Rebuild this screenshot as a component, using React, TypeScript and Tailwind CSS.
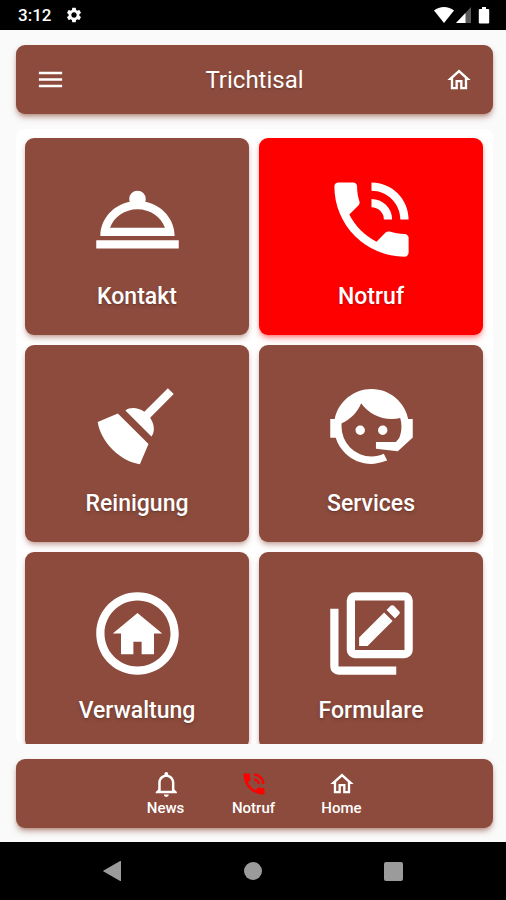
import React from 'react';
import { MdSettings } from 'react-icons/md';

const icons = {
  menu: 'M3,6H21V8H3V6M3,11H21V13H3V11M3,16H21V18H3V16Z',
  home: 'M12 5.69L17 10.19V18H15V12H9V18H7V10.19L12 5.69M12 3L2 12H5V20H11V14H13V20H19V12H22L12 3',
  bell: 'M16,17H7V10.5C7,8 9,6 11.5,6C14,6 16,8 16,10.5M18,16V10.5C18,7.43 15.86,4.86 13,4.18V3.5A1.5,1.5 0 0,0 11.5,2A1.5,1.5 0 0,0 10,3.5V4.18C7.13,4.86 5,7.43 5,10.5V16L3,18V19H20V18M11.5,22A2,2 0 0,0 13.5,20H9.5A2,2 0 0,0 11.5,22Z',
  phone:
    'M15,12H17A5,5 0 0,0 12,7V9A3,3 0 0,1 15,12M19,12H21C21,7 16.97,3 12,3V5C15.86,5 19,8.13 19,12M20,15.5C18.75,15.5 17.55,15.3 16.43,14.93C16.08,14.82 15.69,14.9 15.41,15.18L13.21,17.38C10.38,15.94 8.06,13.62 6.62,10.79L8.82,8.59C9.1,8.31 9.18,7.92 9.07,7.57C8.7,6.45 8.5,5.25 8.5,4A1,1 0 0,0 7.5,3H4A1,1 0 0,0 3,4A17,17 0 0,0 20,21A1,1 0 0,0 21,20V16.5A1,1 0 0,0 20,15.5Z',
  roomService:
    'M12,5A2,2 0 0,1 14,7C14,7.24 13.96,7.47 13.88,7.69C17.95,8.5 21,11.91 21,16H3C3,11.91 6.05,8.5 10.12,7.69C10.04,7.47 10,7.24 10,7A2,2 0 0,1 12,5M22,19H2V17H22V19M12,9.5C8.89,9.5 6.25,11.39 5.34,14H18.66C17.75,11.39 15.11,9.5 12,9.5Z',
  broom:
    'M19.36,2.72L20.78,4.14L15.06,9.85C16.13,11.39 16.28,13.24 15.38,14.44L9.06,8.12C10.26,7.22 12.11,7.37 13.65,8.44L19.36,2.72M5.93,17.57C3.92,15.56 2.69,13.16 2.35,10.92L7.23,8.83L14.67,16.27L12.58,21.15C10.34,20.81 7.94,19.58 5.93,17.57Z',
  agent:
    'M18.72,14.76C19.07,13.91 19.26,13 19.26,12C19.26,11.28 19.15,10.59 18.96,9.95C18.31,10.1 17.63,10.18 16.92,10.18C13.86,10.18 11.15,8.67 9.5,6.34C8.61,8.5 6.91,10.26 4.77,11.22C4.73,11.47 4.73,11.74 4.73,12A7.27,7.27 0 0,0 12,19.27C13.05,19.27 14.06,19.04 14.97,18.63C15.54,19.72 15.8,20.26 15.78,20.26C14.14,20.81 12.87,21.08 12,21.08C9.58,21.08 7.27,20.13 5.57,18.42C4.53,17.38 3.76,16.11 3.33,14.73H2V10.18H3.09C3.93,6.04 7.6,2.92 12,2.92C14.4,2.92 16.71,3.87 18.42,5.58C19.69,6.84 20.54,8.45 20.89,10.18H22V14.67H22V14.69L22,14.73H21.94L18.38,18L13.08,17.4V15.73H17.91L18.72,14.76M9.27,11.77C9.57,11.77 9.86,11.89 10.07,12.11C10.28,12.32 10.4,12.61 10.4,12.91C10.4,13.21 10.28,13.5 10.07,13.71C9.86,13.92 9.57,14.04 9.27,14.04C8.64,14.04 8.13,13.54 8.13,12.91C8.13,12.28 8.64,11.77 9.27,11.77M14.72,11.77C15.35,11.77 15.85,12.28 15.85,12.91C15.85,13.54 15.35,14.04 14.72,14.04C14.09,14.04 13.58,13.54 13.58,12.91A1.14,1.14 0 0,1 14.72,11.77Z',
  homeCircle:
    'M12 20C7.59 20 4 16.41 4 12S7.59 4 12 4 20 7.59 20 12 16.41 20 12 20M12 2C6.47 2 2 6.47 2 12S6.47 22 12 22 22 17.53 22 12 17.53 2 12 2M8 17H11V14H13V17H16V12H18L12 7L6 12H8V17Z',
  forms:
    'M4,6H2V20A2,2 0 0,0 4,22H18V20H4V6M18.7,7.35L17.7,8.35L15.65,6.3L16.65,5.3C16.86,5.08 17.21,5.08 17.42,5.3L18.7,6.58C18.92,6.79 18.92,7.14 18.7,7.35M9,12.94L15.06,6.88L17.12,8.94L11.06,15H9V12.94M20,4L20,4V16L8,16V4H20M20,2H8A2,2 0 0,0 6,4V16A2,2 0 0,0 8,18H20A2,2 0 0,0 22,16V4A2,2 0 0,0 20,2Z',
};

interface IconProps {
  path: string;
  viewBox?: string;
  className?: string;
}

function Icon({ path, viewBox = '0 0 24 24', className }: IconProps) {
  return (
    <svg viewBox={viewBox} fill="currentColor" fillRule="evenodd" className={className} aria-hidden="true">
      <path d={path} />
    </svg>
  );
}

const tiles = [
  { label: 'Kontakt', icon: icons.roomService, color: 'bg-[#8c4b3c] shadow-[#8c4b3c]/40' },
  { label: 'Notruf', icon: icons.phone, color: 'bg-[#ff0000] shadow-[#ff0000]/40' },
  { label: 'Reinigung', icon: icons.broom, color: 'bg-[#8c4b3c] shadow-[#8c4b3c]/40' },
  { label: 'Services', icon: icons.agent, color: 'bg-[#8c4b3c] shadow-[#8c4b3c]/40' },
  { label: 'Verwaltung', icon: icons.homeCircle, color: 'bg-[#8c4b3c] shadow-[#8c4b3c]/40' },
  { label: 'Formulare', icon: icons.forms, color: 'bg-[#8c4b3c] shadow-[#8c4b3c]/40' },
];

const tabs = [
  { label: 'News', icon: icons.bell, viewBox: '0 0.4 22.5 22.5', color: 'text-white' },
  { label: 'Notruf', icon: icons.phone, color: 'text-[#ff0000]' },
  { label: 'Home', icon: icons.home, color: 'text-white' },
];

function StatusBar() {
  return (
    <div className="flex h-[30px] shrink-0 items-center bg-black pr-4 pl-[18px] text-white">
      <span className="text-[17px] leading-5 font-medium">3:12</span>
      <MdSettings className="ml-3.5 h-[18px] w-[18px]" />
      <div className="ml-auto flex items-center">
        <svg viewBox="0 0 20 16" fill="currentColor" className="h-4 w-5" aria-hidden="true">
          <path d="M0 3.6C2.8 1.2 6.2 0 10 0s7.2 1.2 10 3.6L10 16z" />
        </svg>
        <svg viewBox="0 0 16 16" fill="currentColor" className="ml-0.5 h-4 w-4" aria-hidden="true">
          <path d="M15 0v16H0z" fillOpacity="0.35" />
          <path d="M9.5 5.9V16H0z" />
        </svg>
        <svg viewBox="0 0 12 18" fill="currentColor" className="ml-1.5 h-[18px] w-3" aria-hidden="true">
          <path d="M4 1h4v2h2.2a1 1 0 0 1 1 1v12.5a1 1 0 0 1-1 1H1.8a1 1 0 0 1-1-1V4a1 1 0 0 1 1-1H4z" />
        </svg>
      </div>
    </div>
  );
}

function Header() {
  return (
    <header className="flex h-[69px] shrink-0 items-center justify-between rounded-[9px] bg-[#8c4b3c] px-[18px] text-white shadow-md shadow-[#8c4b3c]/50">
      <button type="button" aria-label="Menu" className="flex w-8 justify-center">
        <Icon path={icons.menu} className="h-[31px] w-[31px]" />
      </button>
      <h1 className="text-2xl text-shadow-sm">Trichtisal</h1>
      <button type="button" aria-label="Home" className="flex w-8 justify-center">
        <Icon path={icons.home} className="h-7 w-7" />
      </button>
    </header>
  );
}

function TabBar() {
  return (
    <nav className="flex h-[69px] shrink-0 justify-center rounded-[9px] bg-[#8c4b3c] pt-[11px] pr-[2px] shadow-md shadow-[#8c4b3c]/50">
      {tabs.map((tab) => (
        <button key={tab.label} type="button" className="flex w-[88px] flex-col items-center">
          <Icon path={tab.icon} viewBox={tab.viewBox} className={`h-7 w-7 ${tab.color}`} />
          <span className="text-[15px] leading-5 font-medium text-white">{tab.label}</span>
        </button>
      ))}
    </nav>
  );
}

function SystemNav() {
  return (
    <div className="flex h-[58px] shrink-0 items-center justify-center bg-black text-[#9b9b9b]">
      <button type="button" aria-label="Back" className="flex w-[140px] justify-center">
        <svg viewBox="0 0 20 20" fill="currentColor" className="h-5 w-5" aria-hidden="true">
          <path d="M18 0.6v18.8a.6.6 0 0 1-.9.5L.6 10.6a.7.7 0 0 1 0-1.2L17.1.1a.6.6 0 0 1 .9.5z" />
        </svg>
      </button>
      <button type="button" aria-label="Home" className="flex w-[140px] justify-center">
        <span className="h-[18px] w-[18px] rounded-full bg-current" />
      </button>
      <button type="button" aria-label="Recent apps" className="flex w-[140px] justify-center">
        <span className="h-[19px] w-[19px] rounded-xs bg-current" />
      </button>
    </div>
  );
}

export default function App() {
  return (
    <div className="flex h-screen flex-col bg-[#fafafa] font-['Roboto',sans-serif]">
      <StatusBar />
      <div className="flex min-h-0 flex-1 flex-col gap-[15px] pt-[15px] pr-[13px] pb-3.5 pl-4">
        <Header />
        <main className="min-h-0 flex-1 overflow-y-auto rounded-lg bg-white pt-[9px] pr-2.5 pb-2.5 pl-[9px] [scrollbar-width:none]">
          <div className="grid grid-cols-2 gap-2.5">
            {tiles.map((tile) => (
              <button
                key={tile.label}
                type="button"
                className={`flex h-[197px] flex-col items-center rounded-[9px] pt-8 text-white shadow-md ${tile.color}`}
              >
                <Icon path={tile.icon} className="h-[99px] w-[99px]" />
                <span className="mt-3.5 text-[23px] leading-7 font-medium text-shadow-md">{tile.label}</span>
              </button>
            ))}
          </div>
        </main>
        <TabBar />
      </div>
      <SystemNav />
    </div>
  );
}
